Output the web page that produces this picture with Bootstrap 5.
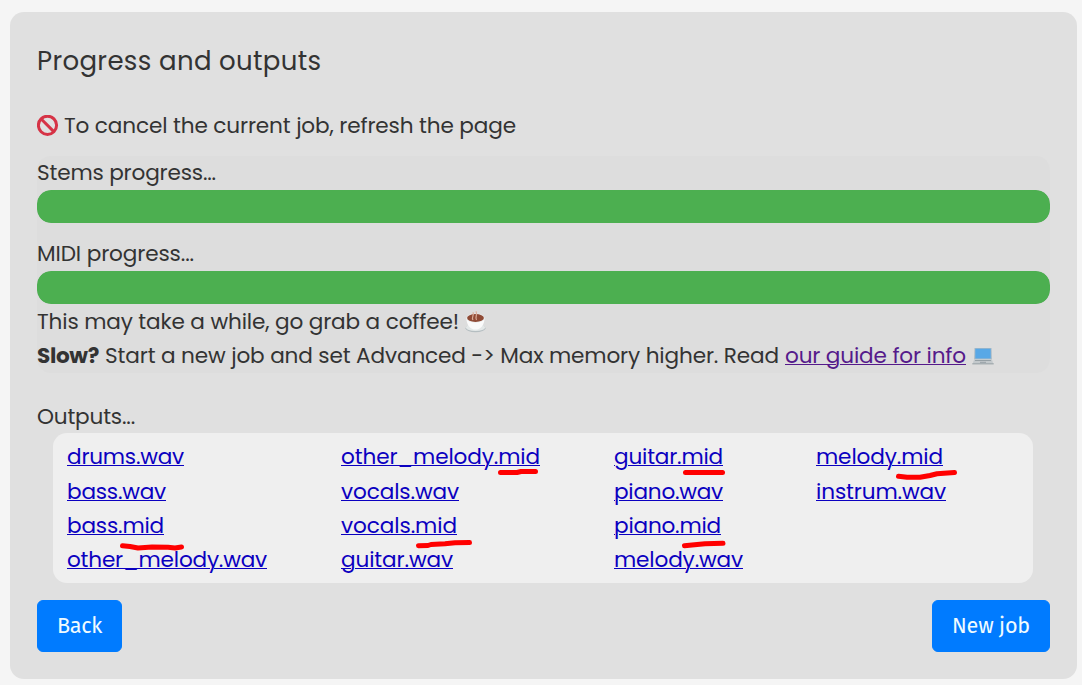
<!DOCTYPE html>
<html lang="en">
<head>
<meta charset="utf-8">
<meta name="viewport" content="width=device-width, initial-scale=1">
<title>Progress and outputs</title>
<link href="https://cdn.jsdelivr.net/npm/bootstrap@5.3.0/dist/css/bootstrap.min.css" rel="stylesheet">
<style>
  body {
    background: #f5f5f5;
    color: #333;
    font-family: Poppins, Inter, sans-serif;
    font-feature-settings: "cv11";
    font-size: 21.6px;
    font-weight: 400;
    line-height: 34px;
  }
  .job-panel { margin: 12px 5px 6px 10px; height: 667px; padding: 31px 27px 27px; background: #e0e0e0; border-radius: 14px; }
  .job-title { font-size: 26px; font-weight: 400; line-height: 36px; margin-bottom: 30px; }
  .job-status { background: #ddd; border-radius: 14px; margin-top: 13px; margin-bottom: 27px; }
  .job-bar { height: 33px; border-radius: 14px; background: #ccc; }
  .job-bar .progress-bar { background: #4caf50; border-radius: 14px; }
  .slow { font-weight: 700; }
  .guide { color: #551a8b; }
  .files { margin: -1px 17px 17px 16px; height: 150px; padding: 7.3px 14px 0; border-radius: 14px; background: #efefef; }
  .file-grid { display: grid; grid-template-columns: 274px 273px 202px auto; grid-template-rows: repeat(4, 34.3px); grid-auto-flow: column; }
  .file-grid a { color: #0b00c0; }
  a { text-decoration-thickness: 1px; }
  .fit { white-space: pre; }
  .emo { width: 22px; height: 22px; flex: none; }
  .btn-job { --bs-btn-color: #f0fbff; --bs-btn-bg: #007bff; --bs-btn-border-color: #007bff; --bs-btn-border-radius: 6px; height: 52px; padding: 0 19px; font: 400 21.6px/50px "Fira Sans", "Noto Sans", sans-serif; }
</style>
</head>
<body>
<main class="job-panel">
  <h1 class="job-title"><span class="fit" data-w="284.5">Progress and outputs</span></h1>
  <div class="d-flex align-items-center">
    <svg class="emo" viewBox="0 0 22 22"><g fill="none" stroke="#d63346" stroke-width="3"><circle cx="10.5" cy="10.3" r="9.1"/><path d="M4.2 4l12.6 12.6"/></g></svg>
    <span class="fit" data-w="452" style="margin-left:5px">To cancel the current job, refresh the page</span>
  </div>
  <section class="job-status">
    <div><span class="fit" data-w="179">Stems progress...</span></div>
    <div class="progress job-bar"><div class="progress-bar w-100"></div></div>
    <div style="margin-top:14px"><span class="fit" data-w="157">MIDI progress...</span></div>
    <div class="progress job-bar"><div class="progress-bar w-100"></div></div>
    <div class="d-flex align-items-center" style="margin-top:1px">
      <span class="fit" data-w="422">This may take a while, go grab a coffee!</span>
      <svg class="emo" style="margin-left:6px" viewBox="0 0 22 22"><ellipse cx="10.5" cy="17.2" rx="10" ry="4" fill="#b5bec1"/><ellipse cx="10.5" cy="16.4" rx="9.6" ry="3.6" fill="#e4e8e8"/><path d="M1.4 7c0 7 4 11.600 9.100 11.600s9-4.600 9-11.600z" fill="#fafafa"/><ellipse cx="10.500" cy="7" rx="9.100" ry="4.500" fill="#e8e8e8"/><ellipse cx="10.500" cy="7" rx="8.400" ry="3.900" fill="#8f4a35"/><path d="M8 9C6 6.500 9.500 4.500 8 1.200M11.500 9C9.500 6 13 4 11 .3" fill="none" stroke="#dcae9b" stroke-width="1.200"/></svg>
    </div>
    <div class="d-flex align-items-center">
      <strong class="fit slow" data-w="62">Slow?</strong>
      <span class="fit" data-w="674" style="margin-left:6px">Start a new job and set Advanced -&gt; Max memory higher. Read</span>
      <a href="#guide" class="fit guide" data-w="181" style="margin-left:6px">our guide for info</a>
      <svg class="emo" style="margin-left:6px" viewBox="0 0 22 22"><path d="M2.500 3h17l.4 11.500H2.100z" fill="#a9bac5"/><path d="M3.300 3.700h15.400v9.800H3.300z" fill="#58a8e6"/><path d="M2 14.800h18l1.200 3.600H.800z" fill="#c3c9cc"/><path d="M3 15.500h16M8 17.300h6" stroke="#96a0a5"/><path d="M.300 18.200h21.400v1.200H.300z" fill="#9da7ab"/></svg>
    </div>
  </section>
  <div><span class="fit" data-w="98">Outputs...</span></div>
  <section class="files position-relative">
    <div class="file-grid">
      <div><a href="#f" class="fit" data-w="117">drums.wav</a></div>
      <div><a href="#f" class="fit" data-w="99">bass.wav</a></div>
      <div><a href="#f" class="fit" data-w="97">bass.mid</a></div>
      <div><a href="#f" class="fit" data-w="200">other_melody.wav</a></div>
      <div><a href="#f" class="fit" data-w="199">other_melody.mid</a></div>
      <div><a href="#f" class="fit" data-w="118">vocals.wav</a></div>
      <div><a href="#f" class="fit" data-w="116">vocals.mid</a></div>
      <div><a href="#f" class="fit" data-w="112">guitar.wav</a></div>
      <div><a href="#f" class="fit" data-w="109">guitar.mid</a></div>
      <div><a href="#f" class="fit" data-w="109">piano.wav</a></div>
      <div><a href="#f" class="fit" data-w="107">piano.mid</a></div>
      <div><a href="#f" class="fit" data-w="129">melody.wav</a></div>
      <div><a href="#f" class="fit" data-w="127">melody.mid</a></div>
      <div><a href="#f" class="fit" data-w="130">instrum.wav</a></div>
    </div>
    <!-- hand-drawn marks under the MIDI files -->
    <svg class="position-absolute top-0 start-0 pe-none" width="980" height="150" viewBox="53 433 980 150" fill="none" stroke="#f00" stroke-width="5" stroke-linecap="round" stroke-linejoin="round">
      <path d="M122.500 545.700L130 546.500 138 548 152 547 168 547.300 175 548 181.500 547"/>
      <path d="M500.500 472.500H517L521 471.500H535.500"/>
      <path d="M418.500 545.700L428 545.500 431 544.500 445 543.700 455 542.800 469.500 542.500"/>
      <path d="M685.500 472.500H722.500"/>
      <path d="M684.500 545.700L692 545 705 543.700 723 543.300"/>
      <path d="M898.500 476.300L907 477.300 920 477.300 930 475.500 937 473.800 954.500 472.500"/>
    </svg>
  </section>
  <div class="d-flex justify-content-between">
    <button type="button" class="btn btn-job"><span class="fit" data-w="45">Back</span></button>
    <button type="button" class="btn btn-job"><span class="fit" data-w="78">New job</span></button>
  </div>
</main>
<script src="https://cdn.jsdelivr.net/npm/bootstrap@5.3.0/dist/js/bootstrap.bundle.min.js"></script>
<script>
  // Track each label so that it keeps its set measure in any fallback font.
  document.querySelectorAll('.fit').forEach(el => {
    const natural = el.getBoundingClientRect().width;
    el.style.letterSpacing = (el.dataset.w - natural) / el.textContent.length + 'px';
  });
</script>
</body>
</html>
